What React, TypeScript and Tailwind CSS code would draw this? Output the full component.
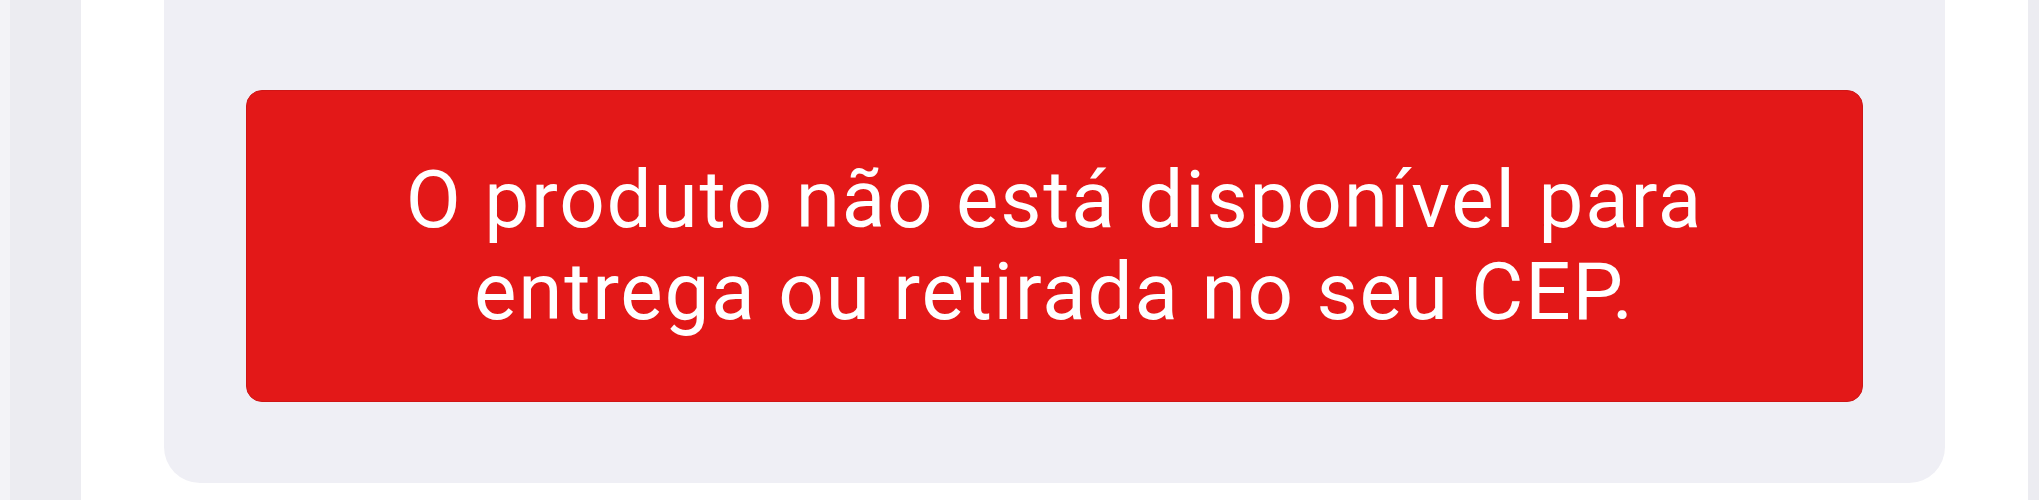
import React from 'react';

const message = 'O produto não está disponível para entrega ou retirada no seu CEP.';

const UnavailableNotice = ({ text }: { text: string }) => (
  <div className="h-[312px] flex items-center justify-center rounded-[16px] border border-[#cf1616] bg-[#e31818] px-[100px]">
    <p className="text-center text-white text-[80px] leading-[92px] tracking-[1.8px] font-[Roboto,'Noto_Sans',sans-serif]">
      {text}
    </p>
  </div>
);

export default function App() {
  return (
    <div className="h-[500px] w-[2039px] flex bg-white overflow-hidden">
      {/* side rails */}
      <div className="w-[81px] flex">
        <div className="w-[10px] bg-[#f3f3f7]" />
        <div className="flex-1 bg-[#ececf1]" />
      </div>

      <main className="flex-1 px-[83px]">
        <section className="h-[483px] rounded-b-[36px] bg-[#efeff5] pt-[90px] px-[82px]">
          <UnavailableNotice text={message} />
        </section>
      </main>

      <div className="w-[11px] bg-[#ececf1]" />
    </div>
  );
}
